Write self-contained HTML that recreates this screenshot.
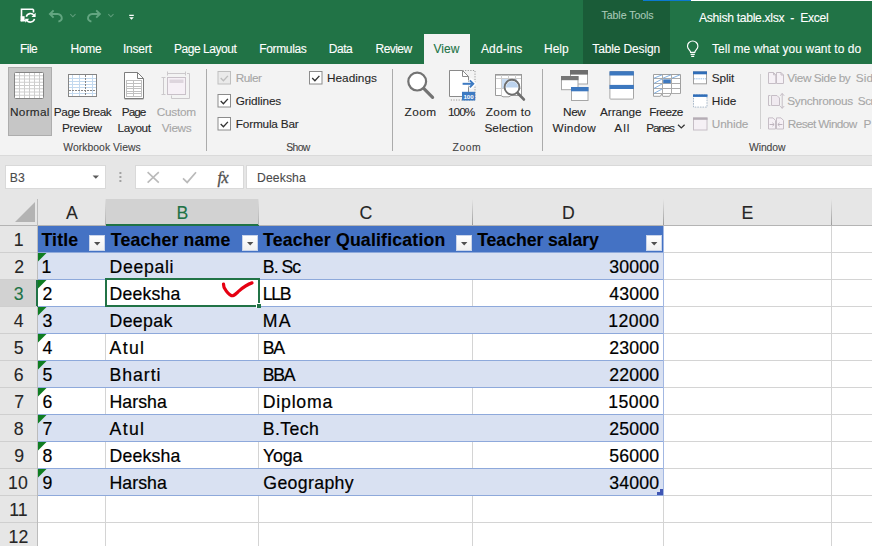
<!DOCTYPE html>
<html lang="en"><head><meta charset="utf-8"><title>Ashish table.xlsx - Excel</title>
<style>
html,body{margin:0;padding:0}
body{width:872px;height:546px;overflow:hidden;position:relative;background:#fff;font-family:"Liberation Sans",sans-serif;}
.t{position:absolute;white-space:nowrap;line-height:1;-webkit-text-stroke:0.1px currentColor;}
.b{position:absolute;box-sizing:border-box;}
svg{position:absolute;overflow:visible}

</style></head><body>
<!-- title bar + tabs -->
<div class="b" style="left:0;top:0;width:872px;height:64px;background:#217346"></div>
<div class="b" style="left:583px;top:0;width:87px;height:64px;background:#1a5c38"></div>
<div class="b" style="left:643px;top:0;width:48px;height:1px;background:#0b79d0"></div>
<div class="b" style="left:691px;top:0;width:181px;height:1px;background:#fff"></div>
<div class="b" style="left:424px;top:34px;width:46px;height:31px;background:#f3f3f3"></div>
<!-- ribbon -->
<div class="b" style="left:0;top:64px;width:872px;height:91px;background:#f3f3f3"></div>
<div class="b" style="left:0;top:155px;width:872px;height:44px;background:#e6e6e6"></div>
<div class="b" style="left:0;top:155px;width:872px;height:1px;background:#dadada"></div>
<!-- Normal button -->
<div class="b" style="left:8px;top:67px;width:44px;height:69px;background:#c6c6c6;border:1px solid #adadad"></div>
<!-- separators -->
<div class="b" style="left:206px;top:69px;width:1px;height:82px;background:#ababab"></div>
<div class="b" style="left:392px;top:69px;width:1px;height:82px;background:#ababab"></div>
<div class="b" style="left:542px;top:69px;width:1px;height:82px;background:#ababab"></div>
<div class="b" style="left:760px;top:74px;width:1px;height:55px;background:#d0d0d0"></div>
<!-- formula bar -->
<div class="b" style="left:5px;top:165px;width:101px;height:24px;background:#fff;border:1px solid #d9d9d9"></div>
<div class="b" style="left:135px;top:165px;width:109px;height:24px;background:#fff;border:1px solid #d9d9d9"></div>
<div class="b" style="left:246px;top:165px;width:630px;height:24px;background:#fff;border:1px solid #d9d9d9"></div>
<div class="b" style="left:0px;top:199px;width:872px;height:347px;background:#fff;"></div>
<div class="b" style="left:0px;top:199px;width:872px;height:26px;background:#e6e6e6;"></div>
<div class="b" style="left:0px;top:199px;width:37px;height:347px;background:#e6e6e6;"></div>
<div class="b" style="left:106px;top:199px;width:153px;height:25px;background:#d2d2d2;"></div>
<div class="b" style="left:106px;top:224px;width:153px;height:2px;background:#217346;"></div>
<div class="b" style="left:0px;top:280px;width:36px;height:26px;background:#d2d2d2;"></div>
<div class="b" style="left:36px;top:280px;width:2px;height:27px;background:#217346;"></div>
<div class="b" style="left:0px;top:225px;width:106px;height:1px;background:#b4b4b4;"></div>
<div class="b" style="left:259px;top:225px;width:613px;height:1px;background:#b4b4b4;"></div>
<div class="b" style="left:37px;top:199px;width:1px;height:81px;background:#bcbcbc;"></div>
<div class="b" style="left:37px;top:307px;width:1px;height:239px;background:#bcbcbc;"></div>
<div class="b" style="left:105px;top:199px;width:1px;height:26px;background:linear-gradient(#e0e0e0,#b0b0b0);"></div>
<div class="b" style="left:258px;top:199px;width:1px;height:26px;background:linear-gradient(#e0e0e0,#b0b0b0);"></div>
<div class="b" style="left:472px;top:199px;width:1px;height:26px;background:linear-gradient(#e6e6e6,#9c9c9c);"></div>
<div class="b" style="left:663px;top:199px;width:1px;height:26px;background:linear-gradient(#e6e6e6,#9c9c9c);"></div>
<div class="b" style="left:831px;top:199px;width:1px;height:26px;background:linear-gradient(#e6e6e6,#9c9c9c);"></div>
<div class="b" style="left:0px;top:252px;width:37px;height:1px;background:#cfcfcf;"></div>
<div class="b" style="left:0px;top:279px;width:37px;height:1px;background:#cfcfcf;"></div>
<div class="b" style="left:0px;top:306px;width:37px;height:1px;background:#cfcfcf;"></div>
<div class="b" style="left:0px;top:333px;width:37px;height:1px;background:#cfcfcf;"></div>
<div class="b" style="left:0px;top:360px;width:37px;height:1px;background:#cfcfcf;"></div>
<div class="b" style="left:0px;top:387px;width:37px;height:1px;background:#cfcfcf;"></div>
<div class="b" style="left:0px;top:414px;width:37px;height:1px;background:#cfcfcf;"></div>
<div class="b" style="left:0px;top:441px;width:37px;height:1px;background:#cfcfcf;"></div>
<div class="b" style="left:0px;top:468px;width:37px;height:1px;background:#cfcfcf;"></div>
<div class="b" style="left:0px;top:495px;width:37px;height:1px;background:#cfcfcf;"></div>
<div class="b" style="left:0px;top:522px;width:37px;height:1px;background:#cfcfcf;"></div>
<div class="b" style="left:0px;top:549px;width:37px;height:1px;background:#cfcfcf;"></div>
<svg style="left:0;top:199px" width="38" height="27" viewBox="0 0 38 27"><path d="M35 3 L35 23 L15 23 Z" fill="#b3b3b3"/></svg>
<div class="b" style="left:105px;top:226px;width:1px;height:320px;background:#d4d4d4;"></div>
<div class="b" style="left:258px;top:226px;width:1px;height:320px;background:#d4d4d4;"></div>
<div class="b" style="left:472px;top:226px;width:1px;height:320px;background:#d4d4d4;"></div>
<div class="b" style="left:663px;top:226px;width:1px;height:320px;background:#d4d4d4;"></div>
<div class="b" style="left:831px;top:226px;width:1px;height:320px;background:#d4d4d4;"></div>
<div class="b" style="left:38px;top:252px;width:834px;height:1px;background:#d4d4d4;"></div>
<div class="b" style="left:38px;top:279px;width:834px;height:1px;background:#d4d4d4;"></div>
<div class="b" style="left:38px;top:306px;width:834px;height:1px;background:#d4d4d4;"></div>
<div class="b" style="left:38px;top:333px;width:834px;height:1px;background:#d4d4d4;"></div>
<div class="b" style="left:38px;top:360px;width:834px;height:1px;background:#d4d4d4;"></div>
<div class="b" style="left:38px;top:387px;width:834px;height:1px;background:#d4d4d4;"></div>
<div class="b" style="left:38px;top:414px;width:834px;height:1px;background:#d4d4d4;"></div>
<div class="b" style="left:38px;top:441px;width:834px;height:1px;background:#d4d4d4;"></div>
<div class="b" style="left:38px;top:468px;width:834px;height:1px;background:#d4d4d4;"></div>
<div class="b" style="left:38px;top:495px;width:834px;height:1px;background:#d4d4d4;"></div>
<div class="b" style="left:38px;top:522px;width:834px;height:1px;background:#d4d4d4;"></div>
<div class="b" style="left:38px;top:549px;width:834px;height:1px;background:#d4d4d4;"></div>
<div class="b" style="left:38px;top:226px;width:625px;height:26px;background:#4472c4;"></div>
<div class="b" style="left:38px;top:253px;width:625px;height:26px;background:#d9e1f2;"></div>
<div class="b" style="left:38px;top:307px;width:625px;height:26px;background:#d9e1f2;"></div>
<div class="b" style="left:38px;top:361px;width:625px;height:26px;background:#d9e1f2;"></div>
<div class="b" style="left:38px;top:415px;width:625px;height:26px;background:#d9e1f2;"></div>
<div class="b" style="left:38px;top:469px;width:625px;height:26px;background:#d9e1f2;"></div>
<div class="b" style="left:38px;top:252px;width:626px;height:1px;background:#8ea9db;"></div>
<div class="b" style="left:38px;top:279px;width:626px;height:1px;background:#8ea9db;"></div>
<div class="b" style="left:38px;top:306px;width:626px;height:1px;background:#8ea9db;"></div>
<div class="b" style="left:38px;top:333px;width:626px;height:1px;background:#8ea9db;"></div>
<div class="b" style="left:38px;top:360px;width:626px;height:1px;background:#8ea9db;"></div>
<div class="b" style="left:38px;top:387px;width:626px;height:1px;background:#8ea9db;"></div>
<div class="b" style="left:38px;top:414px;width:626px;height:1px;background:#8ea9db;"></div>
<div class="b" style="left:38px;top:441px;width:626px;height:1px;background:#8ea9db;"></div>
<div class="b" style="left:38px;top:468px;width:626px;height:1px;background:#8ea9db;"></div>
<div class="b" style="left:38px;top:495px;width:626px;height:1px;background:#8ea9db;"></div>
<div class="b" style="left:663px;top:226px;width:1px;height:270px;background:#a3b8e2;"></div>
<svg style="left:38px;top:253px" width="9" height="9" viewBox="0 0 9 9"><path d="M0 0 L8.5 0 L0 8.5 Z" fill="#0f7d22"/></svg>
<svg style="left:38px;top:280px" width="9" height="9" viewBox="0 0 9 9"><path d="M0 0 L8.5 0 L0 8.5 Z" fill="#0f7d22"/></svg>
<svg style="left:38px;top:307px" width="9" height="9" viewBox="0 0 9 9"><path d="M0 0 L8.5 0 L0 8.5 Z" fill="#0f7d22"/></svg>
<svg style="left:38px;top:334px" width="9" height="9" viewBox="0 0 9 9"><path d="M0 0 L8.5 0 L0 8.5 Z" fill="#0f7d22"/></svg>
<svg style="left:38px;top:361px" width="9" height="9" viewBox="0 0 9 9"><path d="M0 0 L8.5 0 L0 8.5 Z" fill="#0f7d22"/></svg>
<svg style="left:38px;top:388px" width="9" height="9" viewBox="0 0 9 9"><path d="M0 0 L8.5 0 L0 8.5 Z" fill="#0f7d22"/></svg>
<svg style="left:38px;top:415px" width="9" height="9" viewBox="0 0 9 9"><path d="M0 0 L8.5 0 L0 8.5 Z" fill="#0f7d22"/></svg>
<svg style="left:38px;top:442px" width="9" height="9" viewBox="0 0 9 9"><path d="M0 0 L8.5 0 L0 8.5 Z" fill="#0f7d22"/></svg>
<svg style="left:38px;top:469px" width="9" height="9" viewBox="0 0 9 9"><path d="M0 0 L8.5 0 L0 8.5 Z" fill="#0f7d22"/></svg>
<div class="b" style="left:89px;top:235px;width:16px;height:16px;background:linear-gradient(#ffffff,#f0f0f0);border:1px solid #c9d4ea"></div>
<svg style="left:89px;top:235px" width="16" height="16" viewBox="0 0 16 16"><path d="M5 7 L11.4 7 L8.2 10.4 Z" fill="#505050"/></svg>
<div class="b" style="left:242px;top:235px;width:16px;height:16px;background:linear-gradient(#ffffff,#f0f0f0);border:1px solid #c9d4ea"></div>
<svg style="left:242px;top:235px" width="16" height="16" viewBox="0 0 16 16"><path d="M5 7 L11.4 7 L8.2 10.4 Z" fill="#505050"/></svg>
<div class="b" style="left:456px;top:235px;width:16px;height:16px;background:linear-gradient(#ffffff,#f0f0f0);border:1px solid #c9d4ea"></div>
<svg style="left:456px;top:235px" width="16" height="16" viewBox="0 0 16 16"><path d="M5 7 L11.4 7 L8.2 10.4 Z" fill="#505050"/></svg>
<div class="b" style="left:646px;top:235px;width:16px;height:16px;background:linear-gradient(#ffffff,#f0f0f0);border:1px solid #c9d4ea"></div>
<svg style="left:646px;top:235px" width="16" height="16" viewBox="0 0 16 16"><path d="M5 7 L11.4 7 L8.2 10.4 Z" fill="#505050"/></svg>
<div class="b" style="left:105px;top:278px;width:155px;height:29px;border:2px solid #217346;background:#fff"></div>
<div class="b" style="left:256px;top:303px;width:5px;height:5px;background:#fff;"></div>
<div class="b" style="left:257px;top:304px;width:4px;height:4px;background:#217346;"></div>
<svg style="left:215px;top:278px" width="45" height="27" viewBox="0 0 45 27"><path d="M8.5 6 C8.8 8 8.8 9 9.4 10 C11.2 13.2 14 16.6 16.6 17.7 C18.6 18.3 20.6 16 22.9 14 C26.2 11 30.5 6.8 37 4.9" fill="none" stroke="#e60012" stroke-width="3.2" stroke-linecap="round" stroke-linejoin="round"/></svg>
<svg style="left:657px;top:489px" width="6" height="6" viewBox="0 0 6 6"><path d="M6 0 L6 6 L0 6 L0 3 L3 3 L3 0 Z" fill="#4056b4"/></svg>
<svg style="left:0;top:0" width="872" height="546" viewBox="0 0 872 546" shape-rendering="auto">
<!-- ===== Quick access toolbar ===== -->
<path d="M21.5 21.3 V9.3 H32.7 L33.5 10.1 V12.6" stroke="#fff" stroke-width="1.6" fill="none"/>
<rect x="20.7" y="16.2" width="3.9" height="5.1" fill="#fff"/>
<path d="M20.7 20.6 H25.6" stroke="#fff" stroke-width="1.4"/>
<g fill="none" stroke="#fff" stroke-width="1.6">
  <path d="M26.3 16.7 A4.3 4.3 0 0 1 34.0 15.4"/>
  <path d="M34.5 18.9 A4.3 4.3 0 0 1 26.8 20.2"/>
</g>
<path d="M35.6 12.8 V16.9 H31.5 Z" fill="#fff"/>
<path d="M25.2 22.8 V18.7 H29.3 Z" fill="#fff"/>
<!-- undo / redo (dim) -->
<g fill="none" stroke="#63a681" stroke-width="1.9" stroke-linecap="butt" stroke-linejoin="miter">
  <path d="M53.6 10.4 L49.9 14 L53.6 17.6"/>
  <path d="M50.6 14 H57.6 A4.2 4.2 0 0 1 61.8 18.2 C61.8 19.6 60.4 21 58.4 21.6"/>
  <path d="M96.2 10.4 L99.9 14 L96.2 17.6"/>
  <path d="M99.2 14 H92.2 A4.2 4.2 0 0 0 88 18.2 C88 19.6 89.4 21 91.4 21.6"/>
</g>
<g fill="none" stroke="#5e9c7a" stroke-width="1.1">
  <path d="M70.3 14.2 L72.9 16.8 L75.5 14.2"/>
  <path d="M108.3 14.2 L110.9 16.8 L113.5 14.2"/>
</g>
<path d="M129.2 14.8 H133.8 V15.9 H129.2 Z M129.2 17.2 H133.8 L131.5 19.8 Z" fill="#fff"/>
<!-- lightbulb -->
<g fill="none" stroke="#fff" stroke-width="1.15">
  <path d="M690.6 52.4 C690.6 50.2 687.5 49.2 687.5 46.2 A5.2 5.2 0 0 1 697.9 46.2 C697.9 49.2 694.8 50.2 694.8 52.4 Z"/>
  <path d="M690.6 54.4 H694.8 M691.2 56.4 H694.2"/>
</g>

<!-- ===== Workbook Views ===== -->
<!-- Normal -->
<rect x="14.5" y="72.5" width="29" height="26" rx="1" fill="#fff" stroke="#858585" stroke-width="1"/>
<g stroke="#cdcdcd" stroke-width="1">
  <path d="M19.5 73 V98 M24.5 73 V98 M29.5 73 V98 M34.5 73 V98 M39.5 73 V98"/>
  <path d="M15 75.75 H43 M15 79 H43 M15 82.25 H43 M15 85.5 H43 M15 88.75 H43 M15 92 H43 M15 95.25 H43"/>
</g>
<!-- Page Break Preview -->
<rect x="68.5" y="74.5" width="28" height="22" fill="#fff" stroke="#858585" stroke-width="1"/>
<g stroke="#c3d9ef" stroke-width="1">
  <path d="M72.5 75 V96 M79.5 75 V96 M92.5 75 V96"/>
  <path d="M69 78.5 H96 M69 81.5 H96 M69 84.5 H96 M69 87.5 H96 M69 93.5 H96"/>
</g>
<g stroke="#868686" stroke-width="1" stroke-dasharray="2 1">
  <path d="M85.5 75 V96"/>
  <path d="M69 90.5 H96"/>
</g>
<!-- Page Layout -->
<path d="M124.5 72.5 H137.5 L143.5 78.5 V98.5 H124.5 Z" fill="#fff" stroke="#7d7d7d" stroke-width="1"/>
<path d="M137.5 72.5 V78.5 H143.5" fill="none" stroke="#7d7d7d" stroke-width="1"/>
<path d="M124.5 99.5 H143.5" stroke="#c4c4c4" stroke-width="1"/>
<g stroke="#c0c0c0" stroke-width="1" fill="none">
  <rect x="126.5" y="80.5" width="15" height="16"/>
  <path d="M133.5 81 V96 M127 83.5 H141 M127 86.5 H141 M127 88.5 H141 M127 91.5 H141 M127 93.5 H141"/>
</g>
<!-- Custom Views (disabled) -->
<g fill="none" stroke="#cbc8cb" stroke-width="1">
  <path d="M167.5 73.5 H185.5 M167.5 71.5 V75.5 M185.5 71.5 V75.5"/>
  <path d="M163.5 77.5 V94.5 M161.5 77.5 H165.5 M161.5 94.5 H165.5"/>
  <path d="M187 73.5 H189.5 V98.5 H171.5 V95.5"/>
</g>
<rect x="167.5" y="77.5" width="18" height="17" fill="#f6f0f6" stroke="#c9c1c9" stroke-width="1"/>
<rect x="169.5" y="79.5" width="14" height="3.5" fill="#ddd5dd"/>

<!-- ===== Show checkboxes ===== -->
<rect x="218" y="71.5" width="12.5" height="12.5" fill="#eaeaea" stroke="#bfbfbf" stroke-width="1"/>
<path d="M220.7 78.1 L223.4 80.7 L227.9 75.9" fill="none" stroke="#bdbdbd" stroke-width="1.35"/>
<rect x="218" y="94.5" width="12.5" height="12.5" fill="#fff" stroke="#8c8c8c" stroke-width="1"/>
<path d="M220.7 101.1 L223.4 103.7 L227.9 98.9" fill="none" stroke="#333" stroke-width="1.35"/>
<rect x="218" y="117.5" width="12.5" height="12.5" fill="#fff" stroke="#8c8c8c" stroke-width="1"/>
<path d="M220.7 124.1 L223.4 126.7 L227.9 121.9" fill="none" stroke="#333" stroke-width="1.35"/>
<rect x="309.5" y="71.5" width="12.5" height="12.5" fill="#fff" stroke="#8c8c8c" stroke-width="1"/>
<path d="M312.2 78.1 L314.9 80.7 L319.4 75.9" fill="none" stroke="#333" stroke-width="1.35"/>

<!-- ===== Zoom group ===== -->
<circle cx="417.2" cy="81.6" r="8.9" fill="#fff" stroke="#737373" stroke-width="2.2"/>
<path d="M423.9 88.6 L432.6 97.4" stroke="#737373" stroke-width="3.2" stroke-linecap="round"/>
<!-- 100% -->
<path d="M449.5 70.5 H475 V100 H449.5" fill="none" stroke="#9a9a9a" stroke-width="1" stroke-dasharray="1.2 1.4"/>
<path d="M449.5 70.5 H462.5 L468.5 76.5 V96.5 H449.5 Z" fill="#fff" stroke="#8a8a8a" stroke-width="1"/>
<path d="M462.5 70.5 V76.5 H468.5" fill="none" stroke="#8a8a8a" stroke-width="1"/>
<path d="M461.6 83.8 H474.4 M469.6 79.4 L474 83.8 L469.6 88.2" stroke="#fff" stroke-width="4" fill="none"/>
<path d="M462.6 83.8 H472.6" stroke="#3d7ac2" stroke-width="2"/>
<path d="M469.8 80.4 L473.3 83.8 L469.8 87.2" fill="none" stroke="#3d7ac2" stroke-width="1.9"/>
<rect x="462" y="91.8" width="13.2" height="8.7" fill="#3d7ac2"/>
<text x="468.6" y="98.8" font-family="Liberation Sans, sans-serif" font-size="6.2" font-weight="bold" fill="#fff" text-anchor="middle">100</text>
<!-- Zoom to selection -->
<path d="M495.5 74.5 H521.5 V95.5 H511 L509 96.8 H503 L501 95.5 H495.5 Z" fill="#fff" stroke="#9a9a9a" stroke-width="1"/>
<path d="M495 74.8 H522" stroke="#9a9a9a" stroke-width="1.6"/>
<rect x="502" y="79" width="15" height="10" fill="#c9dcf2"/>
<g stroke="#cfcfcf" stroke-width="1">
  <path d="M501.5 75 V95 M508.5 75 V95 M515.5 75 V95"/>
  <path d="M496 78.5 H521 M496 88.5 H521"/>
</g>
<circle cx="512" cy="87.2" r="7.4" fill="#fff" stroke="#6e6e6e" stroke-width="1.9"/>
<path d="M505.9 87.4 A6.1 6.1 0 0 1 518.1 87.4 Z" fill="#bcd3ee"/>
<path d="M517.6 93 L523.8 99.4" stroke="#6e6e6e" stroke-width="2.8" stroke-linecap="round"/>

<!-- ===== Window group ===== -->
<!-- New Window -->
<rect x="570.5" y="70.5" width="17" height="13.5" fill="#fff" stroke="#a6a6a6" stroke-width="1"/>
<rect x="570" y="70" width="18" height="4.6" fill="#6e6e6e"/>
<rect x="561.5" y="76.5" width="16.5" height="13.2" fill="#fff" stroke="#a6a6a6" stroke-width="1"/>
<rect x="561" y="76" width="17.5" height="4.2" fill="#767676"/>
<rect x="571.5" y="87.5" width="16.5" height="13" fill="#fff" stroke="#a6a6a6" stroke-width="1"/>
<rect x="571" y="87" width="17.5" height="4.3" fill="#3d78bf"/>
<!-- Arrange All -->
<rect x="609.9" y="71.5" width="23.6" height="27.6" rx="0.8" fill="#fff" stroke="#a6a6a6" stroke-width="1"/>
<rect x="609.5" y="71.2" width="24.4" height="4.3" fill="#3d78bf"/>
<rect x="609.5" y="84.9" width="24.4" height="4.1" fill="#3d78bf"/>
<!-- Freeze Panes -->
<path d="M653.5 74.5 H680.5 V93.5 H671 L669.5 96.3 H662.8 L661.5 94.2 L660.4 96.3 H653.5 Z" fill="#fff" stroke="#a0a0a0" stroke-width="1"/>
<g stroke="#ababab" stroke-width="1">
  <path d="M662.5 75 V96 M671.5 75 V93"/>
  <path d="M654 78.5 H680 M654 83.5 H680 M654 88.5 H680 M654 93.5 H680"/>
</g>
<g stroke="#74a7de" stroke-width="0.9">
  <path d="M654 78.2 L662 74.8 M654 83.4 L662 79 M654 88.4 L662 84 M654 93.4 L662 89"/>
  <path d="M663 78.2 L671 74.8 M672 78.2 L680 74.8"/>
</g>
<rect x="663.2" y="79.4" width="7.6" height="3.8" fill="#3d78bf"/>
<!-- Freeze panes chevron -->
<path d="M678 124.7 L681.3 127.9 L684.6 124.7" fill="none" stroke="#333" stroke-width="1.25"/>
<!-- Split -->
<rect x="693.5" y="71.9" width="13" height="11.9" fill="#fff" stroke="#a0a0a0" stroke-width="1"/>
<rect x="693" y="71.4" width="14" height="2.9" fill="#2f6db8"/>
<path d="M694 78.8 H706" stroke="#9cc0e6" stroke-width="1" stroke-dasharray="1.4 0.8"/>
<!-- Hide -->
<rect x="693.5" y="94.9" width="13.5" height="12.2" fill="#fff" stroke="#a9b9c9" stroke-width="1" stroke-dasharray="1.6 1"/>
<rect x="693" y="94.4" width="14.5" height="2.5" fill="#2f6db8"/>
<!-- Unhide (disabled) -->
<rect x="693.5" y="118" width="13.5" height="12" fill="#f5f0f5" stroke="#c6bec6" stroke-width="1"/>
<rect x="693" y="117.5" width="14.5" height="2.3" fill="#b5adb5"/>
<!-- View side by side (disabled) -->
<g fill="#f6f1f6" stroke="#c6bec6" stroke-width="1">
  <path d="M768.5 72.5 H773.5 L775.8 74.8 V83.5 H768.5 Z"/>
  <path d="M776.5 72.5 H781 L783.5 75 V83.5 H776.5 Z"/>
  <path d="M773.5 72.5 V74.8 H775.8 M781 72.5 V75 H783.5" fill="none"/>
</g>
<!-- Synchronous scrolling (disabled) -->
<g fill="none" stroke="#c6bec6" stroke-width="1">
  <path d="M770.5 95.5 H768.5 V105.5 H770.5"/>
  <path d="M771.5 95.5 H777 L779.5 98 V105.5 H771.5 Z" fill="#f0eaf0"/>
  <path d="M782.2 93.6 V108.2 M780.2 95.8 L782.2 93.4 L784.2 95.8 M780.2 106 L782.2 108.4 L784.2 106"/>
</g>
<!-- Reset window position (disabled) -->
<g fill="#f6f1f6" stroke="#c6bec6" stroke-width="1">
  <path d="M768.5 117.9 H773 L775.5 120.4 V129 H768.5 Z"/>
  <path d="M776.5 117.9 H781 L783.5 120.4 V129 H776.5 Z"/>
</g>
<g fill="none" stroke="#bdb3bd" stroke-width="1">
  <path d="M769.6 124.5 H774 M772.4 122.8 L774.2 124.5 L772.4 126.2"/>
  <path d="M782.4 124.5 H778 M779.6 122.8 L777.8 124.5 L779.6 126.2"/>
</g>

<!-- ===== Formula bar ===== -->
<path d="M92.6 175.6 H99 L95.8 178.8 Z" fill="#5a5a5a"/>
<g fill="#a2a2a2">
  <rect x="119.4" y="172" width="2" height="2"/>
  <rect x="119.4" y="176" width="2" height="2"/>
  <rect x="119.4" y="180" width="2" height="2"/>
</g>
<path d="M147.6 172.2 L158.8 182.6 M158.8 172.2 L147.6 182.6" stroke="#bababa" stroke-width="1.6" fill="none"/>
<path d="M183 178.4 L187.2 182.4 L196 172.2" stroke="#bababa" stroke-width="1.7" fill="none"/>
<text x="217.6" y="182.6" font-family="Liberation Serif, serif" font-style="italic" font-size="16" fill="#505050" stroke="#505050" stroke-width="0.35" letter-spacing="-0.6">fx</text>
</svg>

<span class="t" id="t0" style="left:601.50px;top:10px;font-size:10.6px;color:#a9c9b7;letter-spacing:-0.070px;">Table Tools</span>
<span class="t" id="t1" style="left:699.00px;top:12px;font-size:12.2px;color:#ffffff;letter-spacing:-0.326px;white-space:pre;">Ashish table.xlsx  -  Excel</span>
<span class="t" id="t2" style="left:20.00px;top:43px;font-size:12px;color:#ffffff;letter-spacing:-0.554px;">File</span>
<span class="t" id="t3" style="left:70.50px;top:43px;font-size:12px;color:#ffffff;letter-spacing:-0.279px;">Home</span>
<span class="t" id="t4" style="left:123.00px;top:43px;font-size:12px;color:#ffffff;letter-spacing:-0.236px;">Insert</span>
<span class="t" id="t5" style="left:174.00px;top:43px;font-size:12px;color:#ffffff;letter-spacing:-0.455px;">Page Layout</span>
<span class="t" id="t6" style="left:259.30px;top:43px;font-size:12px;color:#ffffff;letter-spacing:-0.359px;">Formulas</span>
<span class="t" id="t7" style="left:328.80px;top:43px;font-size:12px;color:#ffffff;letter-spacing:-0.491px;">Data</span>
<span class="t" id="t8" style="left:375.50px;top:43px;font-size:12px;color:#ffffff;letter-spacing:-0.536px;">Review</span>
<span class="t" id="t9" style="left:433.50px;top:43px;font-size:12px;color:#217346;letter-spacing:0.058px;">View</span>
<span class="t" id="t10" style="left:481.00px;top:43px;font-size:12px;color:#ffffff;letter-spacing:0.102px;">Add-ins</span>
<span class="t" id="t11" style="left:544.00px;top:43px;font-size:12px;color:#ffffff;letter-spacing:-0.002px;">Help</span>
<span class="t" id="t12" style="left:592.30px;top:43px;font-size:12px;color:#ffffff;letter-spacing:-0.136px;">Table Design</span>
<span class="t" id="t13" style="left:712.00px;top:43px;font-size:12px;color:#ffffff;letter-spacing:0.042px;">Tell me what you want to do</span>
<span class="t" id="t14" style="left:10.00px;top:107px;font-size:11.8px;color:#262626;letter-spacing:0.281px;">Normal</span>
<span class="t" id="t15" style="left:53.80px;top:107px;font-size:11.8px;color:#262626;letter-spacing:-0.416px;">Page Break</span>
<span class="t" id="t16" style="left:62.00px;top:123px;font-size:11.8px;color:#262626;letter-spacing:-0.323px;">Preview</span>
<span class="t" id="t17" style="left:121.80px;top:107px;font-size:11.8px;color:#262626;letter-spacing:-0.997px;">Page</span>
<span class="t" id="t18" style="left:117.50px;top:123px;font-size:11.8px;color:#262626;letter-spacing:-0.368px;">Layout</span>
<span class="t" id="t19" style="left:156.80px;top:107px;font-size:11.8px;color:#a6a6a6;letter-spacing:-0.263px;">Custom</span>
<span class="t" id="t20" style="left:161.80px;top:123px;font-size:11.8px;color:#a6a6a6;letter-spacing:-0.339px;">Views</span>
<span class="t" id="t21" style="left:63.30px;top:143px;font-size:10.4px;color:#444444;letter-spacing:0.030px;">Workbook Views</span>
<span class="t" id="t22" style="left:286.30px;top:143px;font-size:10.4px;color:#444444;letter-spacing:-0.663px;">Show</span>
<span class="t" id="t23" style="left:452.50px;top:143px;font-size:10.4px;color:#444444;letter-spacing:0.532px;">Zoom</span>
<span class="t" id="t24" style="left:749.00px;top:143px;font-size:10.4px;color:#444444;letter-spacing:-0.090px;">Window</span>
<span class="t" id="t25" style="left:235.80px;top:73px;font-size:11.8px;color:#a6a6a6;letter-spacing:-0.515px;">Ruler</span>
<span class="t" id="t26" style="left:235.80px;top:96px;font-size:11.8px;color:#262626;letter-spacing:-0.144px;">Gridlines</span>
<span class="t" id="t27" style="left:235.80px;top:119px;font-size:11.8px;color:#262626;letter-spacing:-0.197px;">Formula Bar</span>
<span class="t" id="t28" style="left:327.00px;top:73px;font-size:11.8px;color:#262626;letter-spacing:0.008px;">Headings</span>
<span class="t" id="t29" style="left:404.50px;top:107px;font-size:11.8px;color:#262626;letter-spacing:0.491px;">Zoom</span>
<span class="t" id="t30" style="left:448.00px;top:107px;font-size:11.8px;color:#262626;letter-spacing:-0.961px;">100%</span>
<span class="t" id="t31" style="left:485.80px;top:107px;font-size:11.8px;color:#262626;letter-spacing:0.298px;">Zoom to</span>
<span class="t" id="t32" style="left:484.50px;top:123px;font-size:11.8px;color:#262626;letter-spacing:0.004px;">Selection</span>
<span class="t" id="t33" style="left:563.00px;top:107px;font-size:11.8px;color:#262626;letter-spacing:-0.390px;">New</span>
<span class="t" id="t34" style="left:552.50px;top:123px;font-size:11.8px;color:#262626;letter-spacing:0.272px;">Window</span>
<span class="t" id="t35" style="left:600.00px;top:107px;font-size:11.8px;color:#262626;letter-spacing:-0.068px;">Arrange</span>
<span class="t" id="t36" style="left:614.30px;top:123px;font-size:11.8px;color:#262626;letter-spacing:1.005px;">All</span>
<span class="t" id="t37" style="left:649.30px;top:107px;font-size:11.8px;color:#262626;letter-spacing:-0.531px;">Freeze</span>
<span class="t" id="t38" style="left:646.30px;top:123px;font-size:11.8px;color:#262626;letter-spacing:-1.213px;">Panes</span>
<span class="t" id="t39" style="left:711.80px;top:73px;font-size:11.8px;color:#262626;letter-spacing:-0.118px;">Split</span>
<span class="t" id="t40" style="left:711.80px;top:96px;font-size:11.8px;color:#262626;letter-spacing:0.100px;">Hide</span>
<span class="t" id="t41" style="left:711.80px;top:119px;font-size:11.8px;color:#a6a6a6;letter-spacing:-0.165px;">Unhide</span>
<span class="t" id="t42" style="left:787.30px;top:73px;font-size:11.8px;color:#a6a6a6;letter-spacing:-0.417px;">View Side by</span>
<span class="t" id="t43" style="left:855.80px;top:73px;font-size:11.8px;color:#a6a6a6;letter-spacing:0.155px;">Sid</span>
<span class="t" id="t44" style="left:787.30px;top:96px;font-size:11.8px;color:#a6a6a6;letter-spacing:-0.296px;">Synchronous</span>
<span class="t" id="t45" style="left:857.80px;top:96px;font-size:11.8px;color:#a6a6a6;letter-spacing:-0.483px;">Scr</span>
<span class="t" id="t46" style="left:787.80px;top:119px;font-size:11.8px;color:#a6a6a6;letter-spacing:-0.594px;">Reset Window</span>
<span class="t" id="t47" style="left:863.50px;top:119px;font-size:11.8px;color:#a6a6a6;letter-spacing:-0.200px;">P</span>
<span class="t" id="t48" style="left:9.80px;top:172px;font-size:12.2px;color:#4a4a4a;letter-spacing:0.071px;">B3</span>
<span class="t" id="t49" style="left:257.00px;top:172px;font-size:12.2px;color:#4a4a4a;letter-spacing:0.113px;">Deeksha</span>
<span class="t" id="t50" style="left:66.00px;top:205px;font-size:17.7px;color:#262626;">A</span>
<span class="t" id="t51" style="left:176.50px;top:205px;font-size:17.7px;color:#217346;">B</span>
<span class="t" id="t52" style="left:359.50px;top:205px;font-size:17.7px;color:#262626;">C</span>
<span class="t" id="t53" style="left:562.00px;top:205px;font-size:17.7px;color:#262626;">D</span>
<span class="t" id="t54" style="left:741.50px;top:205px;font-size:17.7px;color:#262626;">E</span>
<span class="t" id="t55" style="left:13.80px;top:232px;font-size:17.7px;color:#262626;">1</span>
<span class="t" id="t56" style="left:14.30px;top:259px;font-size:17.7px;color:#262626;">2</span>
<span class="t" id="t57" style="left:13.80px;top:286px;font-size:17.7px;color:#217346;">3</span>
<span class="t" id="t58" style="left:13.80px;top:313px;font-size:17.7px;color:#262626;">4</span>
<span class="t" id="t59" style="left:13.80px;top:340px;font-size:17.7px;color:#262626;">5</span>
<span class="t" id="t60" style="left:13.80px;top:367px;font-size:17.7px;color:#262626;">6</span>
<span class="t" id="t61" style="left:14.30px;top:394px;font-size:17.7px;color:#262626;">7</span>
<span class="t" id="t62" style="left:13.80px;top:421px;font-size:17.7px;color:#262626;">8</span>
<span class="t" id="t63" style="left:14.30px;top:448px;font-size:17.7px;color:#262626;">9</span>
<span class="t" id="t64" style="left:8.08px;top:475px;font-size:17.7px;color:#262626;">10</span>
<span class="t" id="t65" style="left:9.24px;top:502px;font-size:17.7px;color:#262626;">11</span>
<span class="t" id="t66" style="left:8.58px;top:529px;font-size:17.7px;color:#262626;">12</span>
<span class="t" id="t67" style="left:41.40px;top:232px;font-size:17.7px;color:#000;font-weight:bold;letter-spacing:0.174px;">Title</span>
<span class="t" id="t68" style="left:110.80px;top:232px;font-size:17.7px;color:#000;font-weight:bold;letter-spacing:0.172px;">Teacher name</span>
<span class="t" id="t69" style="left:263.00px;top:232px;font-size:17.7px;color:#000;font-weight:bold;letter-spacing:0.187px;">Teacher Qualification</span>
<span class="t" id="t70" style="left:477.20px;top:232px;font-size:17.7px;color:#000;font-weight:bold;letter-spacing:-0.073px;">Teacher salary</span>
<span class="t" id="t71" style="left:41.40px;top:259px;font-size:17.7px;color:#000;letter-spacing:0.800px;-webkit-text-stroke:0.2px #000;">1</span>
<span class="t" id="t72" style="left:109.50px;top:259px;font-size:17.7px;color:#000;letter-spacing:0.658px;-webkit-text-stroke:0.2px #000;">Deepali</span>
<span class="t" id="t73" style="left:262.80px;top:259px;font-size:17.7px;color:#000;letter-spacing:-0.900px;-webkit-text-stroke:0.2px #000;word-spacing:-0.32px;">B. Sc</span>
<span class="t" id="t74" style="left:609.20px;top:259px;font-size:17.7px;color:#000;letter-spacing:0.188px;-webkit-text-stroke:0.2px #000;">30000</span>
<span class="t" id="t75" style="left:42.40px;top:286px;font-size:17.7px;color:#000;letter-spacing:-0.200px;-webkit-text-stroke:0.2px #000;">2</span>
<span class="t" id="t76" style="left:109.50px;top:286px;font-size:17.7px;color:#000;letter-spacing:0.171px;-webkit-text-stroke:0.2px #000;">Deeksha</span>
<span class="t" id="t77" style="left:262.80px;top:286px;font-size:17.7px;color:#000;letter-spacing:-1.300px;-webkit-text-stroke:0.2px #000;">LLB</span>
<span class="t" id="t78" style="left:609.20px;top:286px;font-size:17.7px;color:#000;letter-spacing:0.188px;-webkit-text-stroke:0.2px #000;">43000</span>
<span class="t" id="t79" style="left:42.40px;top:313px;font-size:17.7px;color:#000;letter-spacing:-1.200px;-webkit-text-stroke:0.2px #000;">3</span>
<span class="t" id="t80" style="left:109.50px;top:313px;font-size:17.7px;color:#000;letter-spacing:0.376px;-webkit-text-stroke:0.2px #000;">Deepak</span>
<span class="t" id="t81" style="left:262.80px;top:313px;font-size:17.7px;color:#000;letter-spacing:1.300px;-webkit-text-stroke:0.2px #000;">MA</span>
<span class="t" id="t82" style="left:608.20px;top:313px;font-size:17.7px;color:#000;letter-spacing:0.438px;-webkit-text-stroke:0.2px #000;">12000</span>
<span class="t" id="t83" style="left:42.40px;top:340px;font-size:17.7px;color:#000;letter-spacing:-1.200px;-webkit-text-stroke:0.2px #000;">4</span>
<span class="t" id="t84" style="left:109.60px;top:340px;font-size:17.7px;color:#000;letter-spacing:1.300px;-webkit-text-stroke:0.2px #000;">Atul</span>
<span class="t" id="t85" style="left:262.80px;top:340px;font-size:17.7px;color:#000;letter-spacing:-1.300px;-webkit-text-stroke:0.2px #000;">BA</span>
<span class="t" id="t86" style="left:609.20px;top:340px;font-size:17.7px;color:#000;letter-spacing:0.188px;-webkit-text-stroke:0.2px #000;">23000</span>
<span class="t" id="t87" style="left:42.40px;top:367px;font-size:17.7px;color:#000;letter-spacing:-1.200px;-webkit-text-stroke:0.2px #000;">5</span>
<span class="t" id="t88" style="left:109.50px;top:367px;font-size:17.7px;color:#000;letter-spacing:0.945px;-webkit-text-stroke:0.2px #000;">Bharti</span>
<span class="t" id="t89" style="left:262.80px;top:367px;font-size:17.7px;color:#000;letter-spacing:-1.300px;-webkit-text-stroke:0.2px #000;">BBA</span>
<span class="t" id="t90" style="left:609.20px;top:367px;font-size:17.7px;color:#000;letter-spacing:0.188px;-webkit-text-stroke:0.2px #000;">22000</span>
<span class="t" id="t91" style="left:42.40px;top:394px;font-size:17.7px;color:#000;letter-spacing:-1.200px;-webkit-text-stroke:0.2px #000;">6</span>
<span class="t" id="t92" style="left:109.50px;top:394px;font-size:17.7px;color:#000;letter-spacing:0.064px;-webkit-text-stroke:0.2px #000;">Harsha</span>
<span class="t" id="t93" style="left:262.80px;top:394px;font-size:17.7px;color:#000;letter-spacing:0.777px;-webkit-text-stroke:0.2px #000;">Diploma</span>
<span class="t" id="t94" style="left:608.20px;top:394px;font-size:17.7px;color:#000;letter-spacing:0.438px;-webkit-text-stroke:0.2px #000;">15000</span>
<span class="t" id="t95" style="left:42.40px;top:421px;font-size:17.7px;color:#000;letter-spacing:-0.200px;-webkit-text-stroke:0.2px #000;">7</span>
<span class="t" id="t96" style="left:109.60px;top:421px;font-size:17.7px;color:#000;letter-spacing:1.300px;-webkit-text-stroke:0.2px #000;">Atul</span>
<span class="t" id="t97" style="left:262.80px;top:421px;font-size:17.7px;color:#000;letter-spacing:0.393px;-webkit-text-stroke:0.2px #000;">B.Tech</span>
<span class="t" id="t98" style="left:609.20px;top:421px;font-size:17.7px;color:#000;letter-spacing:0.188px;-webkit-text-stroke:0.2px #000;">25000</span>
<span class="t" id="t99" style="left:42.40px;top:448px;font-size:17.7px;color:#000;letter-spacing:-1.200px;-webkit-text-stroke:0.2px #000;">8</span>
<span class="t" id="t100" style="left:109.50px;top:448px;font-size:17.7px;color:#000;letter-spacing:0.171px;-webkit-text-stroke:0.2px #000;">Deeksha</span>
<span class="t" id="t101" style="left:263.00px;top:448px;font-size:17.7px;color:#000;letter-spacing:-0.116px;-webkit-text-stroke:0.2px #000;">Yoga</span>
<span class="t" id="t102" style="left:609.20px;top:448px;font-size:17.7px;color:#000;letter-spacing:0.188px;-webkit-text-stroke:0.2px #000;">56000</span>
<span class="t" id="t103" style="left:42.40px;top:475px;font-size:17.7px;color:#000;letter-spacing:-0.200px;-webkit-text-stroke:0.2px #000;">9</span>
<span class="t" id="t104" style="left:109.50px;top:475px;font-size:17.7px;color:#000;letter-spacing:0.064px;-webkit-text-stroke:0.2px #000;">Harsha</span>
<span class="t" id="t105" style="left:263.30px;top:475px;font-size:17.7px;color:#000;letter-spacing:0.354px;-webkit-text-stroke:0.2px #000;">Geography</span>
<span class="t" id="t106" style="left:609.20px;top:475px;font-size:17.7px;color:#000;letter-spacing:0.188px;-webkit-text-stroke:0.2px #000;">34000</span>
</body></html>
